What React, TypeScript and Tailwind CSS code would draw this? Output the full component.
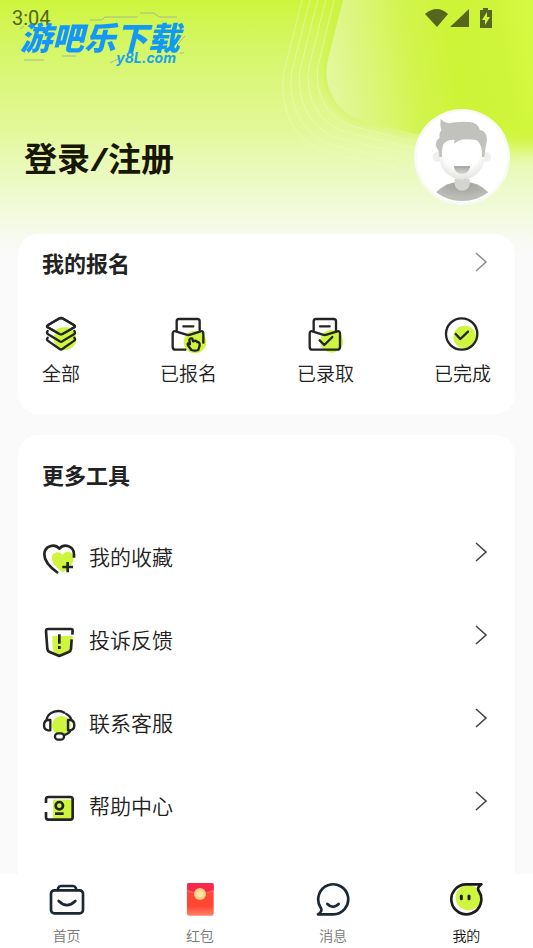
import type { ReactNode } from "react";

interface Entry {
  label: string;
  icon: ReactNode;
}

const stroke = {
  fill: "none",
  stroke: "#242424",
  strokeWidth: 7,
  strokeLinecap: "round" as const,
  strokeLinejoin: "round" as const,
};

const signUps: Entry[] = [
  {
    label: "全部",
    icon: (
      <svg className="size-9" viewBox="39 48 108 108">
        <circle cx="105" cy="116" r="34" fill="#cff53f" />
        <path d="M89 55 Q93 53 97 55 L133 76 Q137 79 133 82 L97 102 Q93 104 89 102 L53 82 Q49 79 53 76 Z" {...stroke} fill="#fff" />
        <path d="M74 93 Q86 80 106 82 Q122 84 129 84 L97 101 Q93 103 89 101 Z" fill="#cff53f" />
        <path d="M89 55 Q93 53 97 55 L133 76 Q137 79 133 82 L97 102 Q93 104 89 102 L53 82 Q49 79 53 76 Z" {...stroke} />
        <path d="M53 93 Q49 98 53 102 L89 124 Q93 127 97 124 L133 102 Q137 98 133 93" {...stroke} />
        <path d="M53 113 Q49 118 53 122 L89 147 Q93 150 97 147 L133 122 Q137 118 133 113" {...stroke} />
      </svg>
    ),
  },
  {
    label: "已报名",
    icon: (
      <svg className="size-9 overflow-visible" viewBox="420 48 108 108">
        <circle cx="495" cy="126" r="34" fill="#cff53f" />
        <path d="M440 92 V64 Q440 57 447 57 H502 Q509 57 509 64 V90 M460 79 H490" {...stroke} />
        <path d="M466 149 H437 Q428 149 428 140 V101 Q428 92 437 94 L469 104 Q475 106 481 104 L512 94 Q520 92 520 101 V128" {...stroke} />
        <path d="M484 150 L474 136 Q471 129 477 130 L480 132 L478 120 Q480 113 487 116 L489 124 Q498 120 502 126 Q510 126 509 136 L505 150 Q495 154 484 150 Z" {...stroke} />
      </svg>
    ),
  },
  {
    label: "已录取",
    icon: (
      <svg className="size-9 overflow-visible" viewBox="52 48 108 108">
        <circle cx="126" cy="124" r="34" fill="#cff53f" />
        <path d="M72 92 V64 Q72 57 79 57 H132 Q139 57 139 64 V92 M91 79 H120" {...stroke} />
        <path d="M68 94 L99 104 Q105 106 111 104 L143 94 Q151 92 151 101 V140 Q151 149 142 149 H69 Q60 149 60 140 V101 Q60 92 68 94 Z M90 121 L104 135 L128 111" {...stroke} />
      </svg>
    ),
  },
  {
    label: "已完成",
    icon: (
      <svg className="size-9" viewBox="463 48 108 108">
        <circle cx="525" cy="111" r="34" fill="#cff53f" />
        <circle cx="516" cy="102" r="47" {...stroke} />
        <path d="M498 102 L512 117 L535 95" {...stroke} />
      </svg>
    ),
  },
];

const tools: Entry[] = [
  {
    label: "我的收藏",
    icon: (
      <svg className="size-[34px]" viewBox="36 63 102 102">
        <path d="M98 154 Q66 132 65 112 Q66 95 82 94 Q92 94 98 101 Q106 90 118 93 Q131 97 131 113 Q128 138 98 154 Z" fill="#cff53f" />
        <path d="M84 156 C60 139 42 121 43 99 C44 75 73 66 88 83 C103 66 132 75 132 100 V110" {...stroke} strokeWidth={8} strokeLinecap="butt" />
        <path d="M113 123 V154 M97 138 H129" {...stroke} strokeWidth={8} strokeLinecap="butt" />
      </svg>
    ),
  },
  {
    label: "投诉反馈",
    icon: (
      <svg className="size-[34px]" viewBox="36 312 102 102">
        <path d="M67 345 H128 L124 387 Q123 392 118 394 L93 404 L78 398 Q69 394 68 386 Z" fill="#cff53f" />
        <path d="M127 341 L128 329 Q128 324 123 324 H54 Q48 324 48 330 L52 384 Q53 391 59 393 L88 405 L116 393 Q122 390 123 384 L125 355" {...stroke} strokeWidth={8} strokeLinecap="butt" />
        <path d="M88 340 V368 M88 375 V384" {...stroke} strokeWidth={8} strokeLinecap="butt" />
      </svg>
    ),
  },
  {
    label: "联系客服",
    icon: (
      <svg className="size-[34px]" viewBox="36 51 102 102">
        <circle cx="94" cy="103" r="28" fill="#cff53f" />
        <path d="M50 86 C52 70 67 60 85 60 Q95 60 103 65 M109 69 Q122 76 124 87" {...stroke} />
        <path d="M61 87 V118 H55 Q42 117 42 103 Q42 88 55 87 Z M114 87 V118 H120 Q133 117 133 103 Q133 88 120 87 Z" {...stroke} />
        <path d="M121 119 Q118 128 102 132" {...stroke} />
        <rect x="75" y="127" width="27" height="19" rx="9" {...stroke} fill="#fff" />
      </svg>
    ),
  },
  {
    label: "帮助中心",
    icon: (
      <svg className="size-[34px]" viewBox="36 300 102 102">
        <path d="M69 326 H128 V386 H69 Z" fill="#cff53f" />
        <path d="M48 336 V325 Q48 318 55 318 H121 Q128 318 128 325 V379 Q128 386 121 386 H55 Q48 386 48 379 V363" {...stroke} strokeWidth={8} strokeLinecap="butt" />
        <circle cx="88" cy="344" r="11" {...stroke} strokeWidth={8} />
        <path d="M75 368 H101" {...stroke} strokeWidth={8} strokeLinecap="butt" />
      </svg>
    ),
  },
];

const tabs: Entry[] = [
  {
    label: "首页",
    icon: (
      <svg className="size-9" viewBox="56 39 108 108">
        <g {...stroke} stroke="#1b2733" strokeWidth={8}>
          <rect x="62" y="64" width="96" height="69" rx="10" />
          <path d="M82 63 L84 56 Q86 51 92 51 H128 Q134 51 136 56 L138 63" />
          <path d="M85 96 Q110 121 135 96" />
        </g>
      </svg>
    ),
  },
  {
    label: "红包",
    icon: (
      <svg className="size-9" viewBox="456 39 108 108">
        <defs>
          <linearGradient id="packet" x1="0" y1="0" x2="0" y2="1">
            <stop offset="0" stopColor="#ff4a3d" />
            <stop offset="0.7" stopColor="#ff4632" />
            <stop offset="1" stopColor="#ff8069" />
          </linearGradient>
          <radialGradient id="coin">
            <stop offset="0" stopColor="#fff0bb" />
            <stop offset="1" stopColor="#fbc477" />
          </radialGradient>
        </defs>
        <rect x="471" y="42" width="80" height="98" rx="6" fill="url(#packet)" />
        <path d="M477 42 H545 Q551 42 551 48 V64 Q511 84 471 64 V48 Q471 42 477 42 Z" fill="#f9284d" />
        <path d="M471 64 Q511 84 551 64" fill="none" stroke="#ff8577" strokeWidth="2" />
        <circle cx="510" cy="75" r="18" fill="url(#coin)" />
      </svg>
    ),
  },
  {
    label: "消息",
    icon: (
      <svg className="size-9" viewBox="75 39 108 108">
        <g {...stroke} stroke="#1b2733" strokeWidth={8}>
          <path d="M84 136 H130 A45 45 0 1 0 91 114 Q100 126 84 136 Z" />
          <path d="M112 105 Q129 122 146 105" />
        </g>
      </svg>
    ),
  },
  {
    label: "我的",
    icon: (
      <svg className="size-9" viewBox="475 39 108 108">
        <circle cx="536" cy="86" r="38" fill="#cff53f" />
        <path d="M575 46 H530 A45 45 0 1 0 568 67 Q560 56 575 46 Z" {...stroke} stroke="#1c1c1c" strokeWidth={8} />
        <path d="M515 81 V89 M538 81 V89" {...stroke} stroke="#1c1c1c" strokeWidth={9} />
      </svg>
    ),
  },
];

function Chevron({ className = "" }: { className?: string }) {
  return (
    <svg className={`h-5 w-5 ${className}`} viewBox="0 0 20 20" fill="none" stroke="currentColor" strokeWidth="1.6">
      <path d="M5 1 L15 10 L5 19" />
    </svg>
  );
}

function HeaderArt() {
  return (
    <svg className="absolute top-0 right-0 h-[252px] w-[263px]" viewBox="0 0 789 756">
      <defs>
        <linearGradient id="panel" x1="170" y1="220" x2="789" y2="120" gradientUnits="userSpaceOnUse">
          <stop offset="0" stopColor="#e2f79f" />
          <stop offset="0.18" stopColor="#dcf67c" />
          <stop offset="0.4" stopColor="#d2f450" />
          <stop offset="0.6" stopColor="#cef438" />
          <stop offset="0.85" stopColor="#cff53a" />
          <stop offset="1" stopColor="#d5fa42" />
        </linearGradient>
        <linearGradient id="shade" x1="0" y1="0" x2="0" y2="1">
          <stop offset="0" stopColor="#cbf23a" />
          <stop offset="0.6" stopColor="#cff34c" stopOpacity="0.8" />
          <stop offset="1" stopColor="#d6f46a" stopOpacity="0.4" />
        </linearGradient>
        <linearGradient id="rings" x1="0" y1="0" x2="1" y2="0">
          <stop offset="0" stopColor="#f2fbc8" stopOpacity="0.8" />
          <stop offset="1" stopColor="#f2fbc8" stopOpacity="0.5" />
        </linearGradient>
        <linearGradient id="fade" x1="0" y1="330" x2="0" y2="510" gradientUnits="userSpaceOnUse">
          <stop offset="0" stopColor="#d0f63a" stopOpacity="0" />
          <stop offset="0.35" stopColor="#d0f63a" />
          <stop offset="0.5" stopColor="#d2f646" />
          <stop offset="1" stopColor="#e6f8a8" stopOpacity="0" />
        </linearGradient>
        <filter id="soft" x="-20%" y="-20%" width="140%" height="140%">
          <feGaussianBlur stdDeviation="12" />
        </filter>
      </defs>
      <path d="M205 -60 L155 190 Q150 310 260 375 L440 425 L800 450 V-60 Z" fill="url(#shade)" filter="url(#soft)" />
      <path d="M219 0 L173 180 C155 260 200 340 275 362 L440 402 H789 V0 Z" fill="url(#panel)" />
      <path d="M490 330 H900 V530 H490 Z" fill="url(#fade)" filter="url(#soft)" />
      <g fill="none" stroke="url(#rings)" strokeWidth="2">
        <path d="M192 0 L145 195 C130 285 175 360 260 382 L440 426" />
        <path d="M167 0 L117 200 C102 295 150 380 240 400 L440 446" />
        <path d="M143 0 L91 205 C76 305 125 400 225 420 L440 468" />
        <path d="M120 0 L66 210 C50 320 100 415 205 440 L440 494" />
        <path d="M96 0 L42 215 C25 330 75 435 185 460 L440 518" />
      </g>
    </svg>
  );
}

function StatusBar() {
  return (
    <div className="flex h-9 items-center justify-between pr-10 pl-3 text-[#56661c]">
      <span className="text-xl">3:04</span>
      <svg className="h-5 w-[68px]" viewBox="0 0 68 20" fill="currentColor">
        <path d="M0 6 Q12 -4 23 6 L12 19 Z" />
        <path d="M44 1 V19 H25 Z" />
        <path d="M55 2 H58 V0 H63 V2 H67 V20 H55 Z" />
        <path d="M62 4 L57 12 H60 V17 L65 9 H62 Z" fill="#d0f53c" />
      </svg>
    </div>
  );
}

function SiteMark() {
  return (
    <div className="absolute top-4 left-5 flex w-[164px] flex-col">
      <svg className="absolute top-0 left-0 h-12 w-[164px] overflow-visible" viewBox="0 0 164 48" fill="none" stroke="#a9b88c">
        <path d="M70 4 H82 L85 1 H118 M120 -3 H134 L139 1 H157 M4 44 H24 M0 13 L4 10 M42 40 H56 M90 47 L100 42 M158 28 L165 20 M160 37 H164" />
      </svg>
      <span className="relative bg-linear-to-r from-[#1495ff] to-[#129aef] bg-clip-text pr-2 text-[32px] leading-[46px] font-black whitespace-nowrap text-transparent italic">
        游吧乐下载
      </span>
      <span className="absolute top-8 right-2 font-[Inter,sans-serif] text-sm leading-5 font-bold text-[#1ba4e8] italic">
        y8L.com
      </span>
    </div>
  );
}

function Avatar() {
  return (
    <svg className="size-24" viewBox="27 27 288 288">
      <defs>
        <radialGradient id="face" cx="0.5" cy="0.35" r="0.65">
          <stop offset="0.6" stopColor="#fff" />
          <stop offset="1" stopColor="#e2e3df" />
        </radialGradient>
        <radialGradient id="shirt" cx="0.5" cy="0.2" r="0.6">
          <stop offset="0" stopColor="#a0a19d" />
          <stop offset="1" stopColor="#bbbcb7" />
        </radialGradient>
        <linearGradient id="mouth" x1="0" y1="0" x2="0" y2="1">
          <stop offset="0" stopColor="#a6a7a2" />
          <stop offset="1" stopColor="#d5d6d1" />
        </linearGradient>
      </defs>
      <circle cx="171" cy="171" r="144" fill="#f9faf6" />
      <circle cx="171" cy="171" r="136" fill="#fff" />
      <path d="M93 277 Q125 246 160 246 H184 Q218 246 250 277 Q216 303 171 303 Q127 303 93 277 Z" fill="url(#shirt)" />
      <path d="M149 236 H194 V252 A22 20 0 0 1 149 252 Z" fill="#d4d5d0" />
      <circle cx="98" cy="171" r="15" fill="#eff0ec" />
      <circle cx="243" cy="171" r="15" fill="#eff0ec" />
      <path d="M103 150 Q106 108 171 108 Q236 108 239 150 Q243 192 221 217 Q197 239 171 239 Q145 239 121 217 Q99 192 103 150 Z" fill="url(#face)" />
      <path
        d="M107 57 Q117 68 131 70 Q161 63 193 66 Q220 69 224 89 Q247 93 246 121 Q240 147 238 171 H231 Q233 135 216 121 Q182 114 161 122 L147 131 L149 119 Q124 118 114 134 Q109 150 111 171 H103 Q103 151 93 139 Q90 121 104 113 Q101 101 109 91 Q104 76 107 57 Z"
        fill="#c1c2bd"
      />
      <path d="M146 198 H196 Q191 222 171 222 Q151 222 146 198 Z" fill="url(#mouth)" />
      <path d="M147 198 H195 L193 204 H149 Z" fill="#aaaba6" />
    </svg>
  );
}

export default function App() {
  return (
    <div className="flex h-dvh flex-col bg-[#fafafa] font-['Roboto','Noto_Sans_CJK_SC',sans-serif] text-[#222]">
      <main className="relative min-h-0 flex-1 overflow-hidden">
        {/* Header background */}
        <div className="absolute inset-x-0 top-0 h-[252px] bg-linear-to-b from-[#cdf53b] via-[#e2f896] to-[#fafafa]">
          <HeaderArt />
        </div>

        <div className="relative">
          <StatusBar />
          <SiteMark />

          <header className="flex items-center justify-between pt-[73px] pr-[23px] pb-[29px] pl-6">
            <button type="button" className="pt-1 text-[33px] leading-10 font-bold text-[#171703]">
              登录<span className="mx-0.5 font-['Noto_Sans'] italic">/</span>注册
            </button>
            <button type="button" aria-label="登录">
              <Avatar />
            </button>
          </header>

          <div className="flex flex-col gap-[21px] px-[18px]">
            {/* Sign-ups */}
            <section className="rounded-[20px] bg-white px-6 pt-3.5 pb-[25px]">
              <div className="flex h-8 items-center justify-between">
                <h2 className="text-[22px] font-bold">我的报名</h2>
                <button type="button" aria-label="我的报名" className="mb-1 text-[#909090]">
                  <Chevron />
                </button>
              </div>
              <div className="mt-9 flex justify-between">
                {signUps.map((item) => (
                  <button key={item.label} type="button" className="flex flex-col items-center gap-[9px]">
                    {item.icon}
                    <span className="text-[19px] leading-7 font-[350]">{item.label}</span>
                  </button>
                ))}
              </div>
            </section>

            {/* Tools */}
            <section className="rounded-[20px] bg-white px-6 pt-[26px] pb-24">
              <h2 className="text-[22px] leading-8 font-bold">更多工具</h2>
              <ul className="mt-6">
                {tools.map((item) => (
                  <li key={item.label}>
                    <button type="button" className="flex h-[83px] w-full items-center gap-[13px]">
                      {item.icon}
                      <span className="text-[21px] font-[350]">{item.label}</span>
                      <Chevron className="mb-3.5 ml-auto text-[#444]" />
                    </button>
                  </li>
                ))}
              </ul>
            </section>
          </div>
        </div>
      </main>

      {/* Bottom tabs */}
      <nav className="grid grid-cols-4 bg-white pt-2 pb-0.5">
        {tabs.map((tab) => (
          <a
            key={tab.label}
            href="#"
            aria-current={tab.label === "我的" ? "page" : undefined}
            className="flex flex-col items-center gap-2 font-[350] text-[#777] aria-[current=page]:text-[#111]"
          >
            {tab.icon}
            <span className="text-sm">{tab.label}</span>
          </a>
        ))}
      </nav>
    </div>
  );
}
